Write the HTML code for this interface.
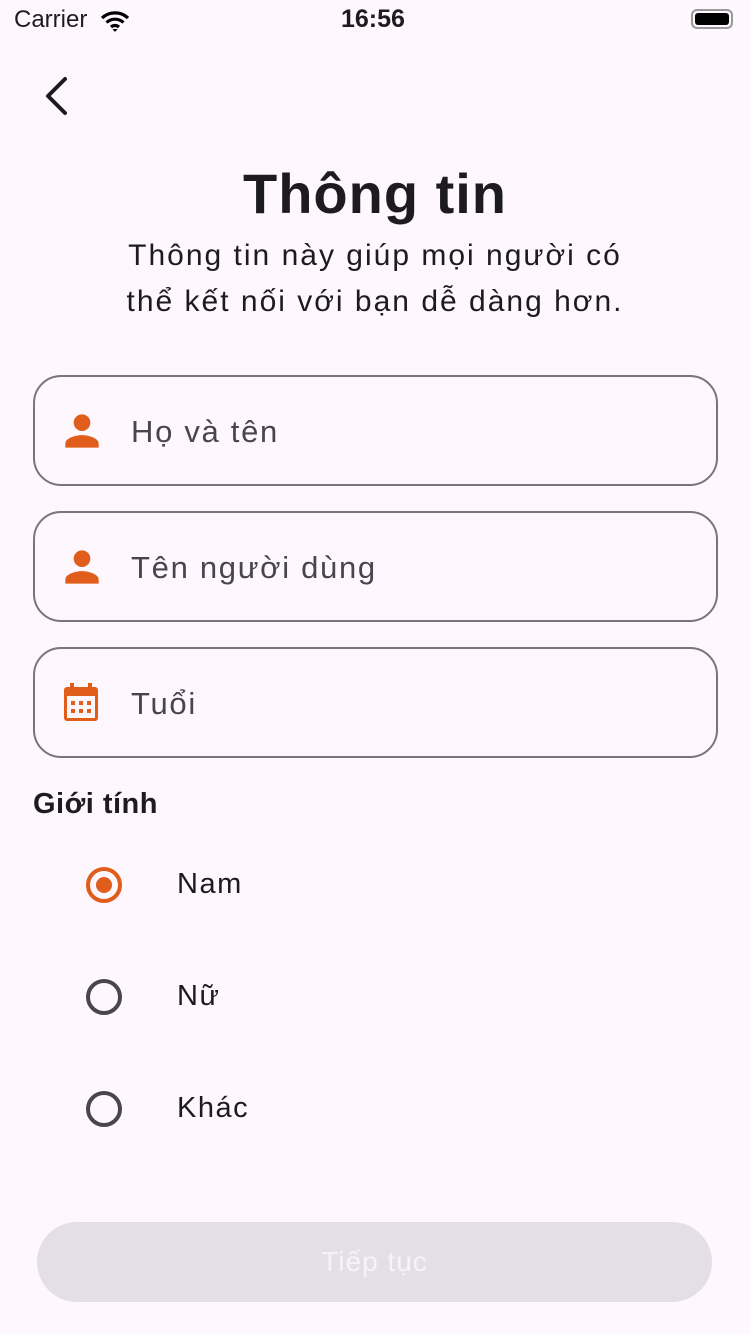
<!DOCTYPE html>
<html><head><meta charset="utf-8"><style>
body{margin:0;width:750px;height:1334px;background:#fef7fd;font-family:"Liberation Sans",sans-serif;position:relative;overflow:hidden;color:#1d1b20}
.a{position:absolute}
.f{position:absolute;left:33px;width:685px;height:111px;border:2px solid #79747e;border-radius:28px;box-sizing:border-box}
.f span{position:absolute;left:96px;top:0;line-height:109px;font-size:31px;color:#49454f;letter-spacing:1.7px}
.f svg{position:absolute;left:22px;top:29px}
.r{position:absolute;left:86px;width:36px;height:36px;border:4px solid #49454f;border-radius:50%;box-sizing:border-box}
.rl{position:absolute;left:177px;font-size:29px;letter-spacing:1.5px}
</style></head><body>
<div class="a" style="left:14px;top:6px;font-size:24px">Carrier</div>
<svg class="a" style="left:100px;top:10px" width="30" height="22" viewBox="0 0 30 22"><path d="M2 8a19 19 0 0 1 26 0M6.5 12.5a12.5 12.5 0 0 1 17 0M11 17a6 6 0 0 1 8 0" stroke="#000" stroke-width="3.2" fill="none"/><path d="M12.5 19l2.5 3 2.5-3z"/></svg>
<div class="a" style="left:341px;top:5px;font-size:25px;font-weight:bold">16:56</div>
<div class="a" style="left:691px;top:9px;width:42px;height:20px;border:2px solid #999;border-radius:6px;box-sizing:border-box;padding:2px"><div style="background:#000;height:100%;border-radius:3px"></div></div>
<svg class="a" style="left:40px;top:75px" width="30" height="42" viewBox="0 0 30 42"><path d="M25 4L8 21l17 17" stroke="#1d1b20" stroke-width="4" fill="none" stroke-linecap="round" stroke-linejoin="round"/></svg>
<div class="a" style="left:0;width:750px;top:161px;text-align:center;font-size:56px;font-weight:bold;letter-spacing:1px">Thông tin</div>
<div class="a" style="left:0;width:750px;top:233px;text-align:center;font-size:30px;line-height:46px;letter-spacing:2px">Thông tin này giúp mọi người có<br>thể kết nối với bạn dễ dàng hơn.</div>
<div class="f" style="top:375px"><svg width="50" height="50" viewBox="0 0 24 24"><path fill="#e05d1b" d="M12 12a4 4 0 1 0 0-8 4 4 0 0 0 0 8zm0 2c-2.7 0-8 1.3-8 4v2h16v-2c0-2.7-5.3-4-8-4z"/></svg><span>Họ và tên</span></div>
<div class="f" style="top:511px"><svg width="50" height="50" viewBox="0 0 24 24"><path fill="#e05d1b" d="M12 12a4 4 0 1 0 0-8 4 4 0 0 0 0 8zm0 2c-2.7 0-8 1.3-8 4v2h16v-2c0-2.7-5.3-4-8-4z"/></svg><span>Tên người dùng</span></div>
<div class="f" style="top:647px"><svg width="36" height="40" viewBox="0 0 36 40" style="left:28px;top:33px"><rect x="1" y="5" width="34" height="34" rx="3" fill="#e05d1b"/><rect x="7" y="1" width="4" height="7" fill="#e05d1b"/><rect x="25" y="1" width="4" height="7" fill="#e05d1b"/><rect x="4" y="14" width="28" height="22" fill="#fef7fd"/><g fill="#e05d1b"><rect x="8" y="19" width="4" height="4"/><rect x="16" y="19" width="4" height="4"/><rect x="24" y="19" width="4" height="4"/><rect x="8" y="27" width="4" height="4"/><rect x="16" y="27" width="4" height="4"/><rect x="24" y="27" width="4" height="4"/></g></svg><span>Tuổi</span></div>
<div class="a" style="left:33px;top:788px;font-size:29px;font-weight:bold;letter-spacing:0.5px">Giới tính</div>
<div class="r" style="top:867px;border-color:#e05d1b"><div style="position:absolute;left:6px;top:6px;width:16px;height:16px;border-radius:50%;background:#e05d1b"></div></div>
<div class="rl" style="top:868px">Nam</div>
<div class="r" style="top:979px"></div><div class="rl" style="top:980px">Nữ</div>
<div class="r" style="top:1091px"></div><div class="rl" style="top:1092px">Khác</div>
<div class="a" style="left:37px;top:1222px;width:675px;height:80px;border-radius:40px;background:#e4dfe6;text-align:center;line-height:80px;font-size:28px;color:#f7f3f9;letter-spacing:1px">Tiếp tục</div>
</body></html>
